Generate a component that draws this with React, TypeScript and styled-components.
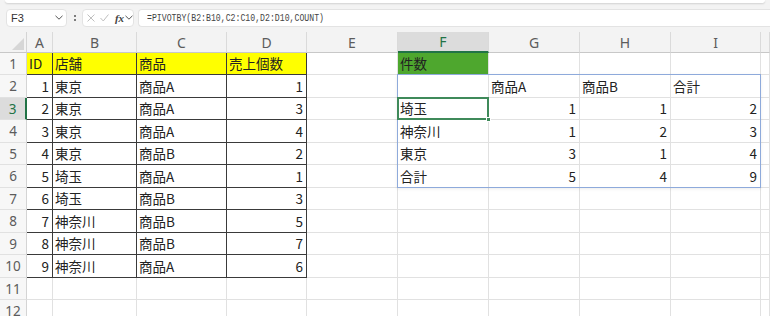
import React from 'react';
import styled, { createGlobalStyle, css } from 'styled-components';

const GlobalStyle = createGlobalStyle`
  html, body {
    margin: 0;
    padding: 0;
    background: #f3f3f3;
  }
  body {
    font-family: "Noto Sans CJK JP", "Noto Sans", sans-serif;
    overflow: hidden;
  }
`;

const COL_WIDTHS = [27, 26, 84, 90, 80, 91, 91, 91, 91, 90];
const ROW_HEIGHTS = [21, 22, 23, 22, 23, 22, 23, 22, 23, 22, 23, 22, 23];
const LETTERS = ['A', 'B', 'C', 'D', 'E', 'F', 'G', 'H', 'I', ''];

const GRID_LINE = '#e1e1e1';
const TABLE_LINE = '#3a3a3a';
const ACCENT = '#217346';

type Align = 'left' | 'right';
type CellData = { text?: string | number; align?: Align; fill?: string; boxed?: boolean };

// A1:D10 source table
const table: (string | number)[][] = [
  ['ID', '店舗', '商品', '売上個数'],
  [1, '東京', '商品A', 1],
  [2, '東京', '商品A', 3],
  [3, '東京', '商品A', 4],
  [4, '東京', '商品B', 2],
  [5, '埼玉', '商品A', 1],
  [6, '埼玉', '商品B', 3],
  [7, '神奈川', '商品B', 5],
  [8, '神奈川', '商品B', 7],
  [9, '神奈川', '商品A', 6],
];

// F1:I6 pivot result
const pivot: (string | number)[][] = [
  ['件数', '', '', ''],
  ['', '商品A', '商品B', '合計'],
  ['埼玉', 1, 1, 2],
  ['神奈川', 1, 2, 3],
  ['東京', 3, 1, 4],
  ['合計', 5, 4, 9],
];

const cellAt = (row: number, col: number): CellData => {
  if (row <= 10 && col <= 3) {
    const v = table[row - 1][col];
    return {
      text: v,
      align: typeof v === 'number' ? 'right' : 'left',
      fill: row === 1 ? '#ffff00' : undefined,
      boxed: true,
    };
  }
  if (row <= 6 && col >= 5 && col <= 8) {
    const v = pivot[row - 1][col - 5];
    return {
      text: v,
      align: typeof v === 'number' ? 'right' : 'left',
      fill: row === 1 && col === 5 ? '#4ea72e' : undefined,
    };
  }
  return {};
};

const Page = styled.div`
  width: 770px;
  height: 316px;
  overflow: hidden;
  background: #f3f3f3;
`;

const RibbonEdge = styled.div`
  height: 3px;
  margin: 0 5px;
  background: #fff;
  border-radius: 0 0 6px 6px;
  box-shadow: 0 1px 2px rgba(0, 0, 0, 0.14);
`;

const FormulaBar = styled.div`
  display: flex;
  align-items: center;
  height: 29px;
  padding-left: 6px;
`;

const NameBox = styled.div`
  box-sizing: border-box;
  display: flex;
  align-items: center;
  justify-content: space-between;
  width: 61px;
  height: 18px;
  padding: 0 3px 0 4px;
  background: #fff;
  border: 1px solid #e3e3e3;
  border-radius: 4px;
  font-family: "Liberation Sans", Arial, sans-serif;
  font-size: 11px;
  color: #333;
`;

const Dots = styled.div`
  display: flex;
  flex-direction: column;
  gap: 2px;
  margin: 0 6px 0 7px;
  span {
    width: 2px;
    height: 2px;
    border-radius: 1px;
    background: #555;
  }
`;

const FuncBox = styled.div`
  box-sizing: border-box;
  display: flex;
  align-items: center;
  gap: 5px;
  width: 52px;
  height: 18px;
  padding-left: 4px;
  background: #fff;
  border: 1px solid #e3e3e3;
  border-radius: 4px;
`;

const Fx = styled.span`
  font-family: "Liberation Serif", serif;
  font-style: italic;
  font-weight: bold;
  font-size: 11px;
  color: #444;
  margin-left: 1px;
  margin-right: -4px;
`;

const FormulaInput = styled.div`
  flex: 1;
  box-sizing: border-box;
  height: 18px;
  margin-left: 4px;
  padding-left: 8px;
  display: flex;
  align-items: center;
  background: #fff;
  border: 1px solid #e3e3e3;
  border-right: none;
  border-radius: 4px 0 0 4px;
  overflow: hidden;
`;

const FormulaText = styled.span`
  font-family: "Liberation Mono", "DejaVu Sans Mono", monospace;
  font-size: 11px;
  color: #444;
  white-space: nowrap;
  transform: scaleX(0.745);
  transform-origin: left center;
`;

const Sheet = styled.div`
  display: grid;
  grid-template-columns: ${COL_WIDTHS.map((w) => `${w}px`).join(' ')} 1fr;
  grid-template-rows: ${ROW_HEIGHTS.map((h) => `${h}px`).join(' ')};
  background: #fff;
`;

// every grid item is placed explicitly so the overlays don't push cells around
const placed = css<{ $row: number; $col: number }>`
  grid-row: ${(p) => p.$row};
  grid-column: ${(p) => p.$col};
`;

const Corner = styled.div`
  grid-row: 1;
  grid-column: 1;
  box-sizing: border-box;
  display: flex;
  align-items: flex-end;
  justify-content: flex-end;
  padding: 0 2px 2px 0;
  background: #f3f3f3;
  border-right: 1px solid #d4d4d4;
  border-bottom: 1px solid #c8c8c8;
`;

const ColHeader = styled.div<{ $row: number; $col: number; $active?: boolean }>`
  ${placed};
  box-sizing: border-box;
  display: flex;
  align-items: center;
  justify-content: center;
  background: #f3f3f3;
  border-right: 1px solid #dadada;
  border-bottom: 1px solid #c8c8c8;
  font-family: "Noto Sans", "Liberation Sans", sans-serif;
  font-size: 14px;
  color: #5c5c5c;
  ${(p) =>
    p.$active &&
    css`
      background: #dcdcdc;
      color: ${ACCENT};
      border-bottom: 2px solid ${ACCENT};
    `}
`;

const RowHeader = styled.div<{ $row: number; $col: number; $active?: boolean }>`
  ${placed};
  box-sizing: border-box;
  display: flex;
  align-items: center;
  justify-content: center;
  background: #f7f7f7;
  border-right: 1px solid #d4d4d4;
  border-bottom: 1px solid ${GRID_LINE};
  font-family: "Noto Sans", "Liberation Sans", sans-serif;
  font-size: 13.5px;
  color: #5c5c5c;
  ${(p) =>
    p.$active &&
    css`
      background: #dcdcdc;
      color: ${ACCENT};
      border-right: 2px solid ${ACCENT};
    `}
`;

const Cell = styled.div<{ $row: number; $col: number; $align?: Align; $fill?: string; $boxed?: boolean }>`
  ${placed};
  box-sizing: border-box;
  display: flex;
  align-items: center;
  justify-content: ${(p) => (p.$align === 'right' ? 'flex-end' : 'flex-start')};
  padding: 1px 3px 0 2px;
  background: ${(p) => p.$fill || '#fff'};
  border-right: 1px solid ${(p) => (p.$boxed ? TABLE_LINE : GRID_LINE)};
  border-bottom: 1px solid ${(p) => (p.$boxed ? TABLE_LINE : GRID_LINE)};
  font-size: 13.5px;
  line-height: 1;
  color: #222;
  white-space: nowrap;
  overflow: hidden;
`;

const SpillOutline = styled.div`
  grid-column: 7 / 11;
  grid-row: 3 / 8;
  margin: -1px 0 0 -1px;
  border: 1px solid #8eaadb;
  box-shadow: 0 1px 3px rgba(0, 0, 0, 0.08);
  pointer-events: none;
`;

const Selection = styled.div`
  position: relative;
  grid-column: 7 / 8;
  grid-row: 4 / 5;
  margin: -1px 0 0 -1px;
  border: 2px solid #3f8a5a;
  pointer-events: none;
`;

const FillHandle = styled.span`
  position: absolute;
  right: -4px;
  bottom: -4px;
  width: 5px;
  height: 5px;
  background: #3f8a5a;
  border: 1px solid #fff;
  box-sizing: border-box;
`;

const Chevron = () => (
  <svg width="8" height="5" viewBox="0 0 8 5">
    <path d="M0.5 0.8 L4 4.2 L7.5 0.8" fill="none" stroke="#555" strokeWidth="1" />
  </svg>
);

const App: React.FC = () => {
  const rows = Array.from({ length: 12 }, (_, i) => i + 1);
  const cols = Array.from({ length: 10 }, (_, i) => i);

  return (
    <Page>
      <GlobalStyle />
      <RibbonEdge />
      <FormulaBar>
        <NameBox>
          <span>F3</span>
          <Chevron />
        </NameBox>
        <Dots>
          <span />
          <span />
        </Dots>
        <FuncBox>
          <svg width="8" height="8" viewBox="0 0 8 8">
            <path d="M0.5 0.5 L7.5 7.5 M7.5 0.5 L0.5 7.5" stroke="#bdbdbd" strokeWidth="1" />
          </svg>
          <svg width="9" height="8" viewBox="0 0 9 8">
            <path d="M0.5 4 L3.3 7 L8.5 0.5" fill="none" stroke="#bdbdbd" strokeWidth="1" />
          </svg>
          <Fx>fx</Fx>
          <Chevron />
        </FuncBox>
        <FormulaInput>
          <FormulaText>=PIVOTBY(B2:B10,C2:C10,D2:D10,COUNT)</FormulaText>
        </FormulaInput>
      </FormulaBar>

      <Sheet>
        <Corner>
          <svg width="12" height="12" viewBox="0 0 12 12">
            <path d="M12 0 L12 12 L0 12 Z" fill="#d6d6d6" />
          </svg>
        </Corner>
        {cols.map((c) => (
          <ColHeader key={`h${c}`} $row={1} $col={c + 2} $active={c === 5}>
            {LETTERS[c]}
          </ColHeader>
        ))}

        {rows.map((r) => (
          <React.Fragment key={r}>
            <RowHeader $row={r + 1} $col={1} $active={r === 3}>
              {r}
            </RowHeader>
            {cols.map((c) => {
              const d = cellAt(r, c);
              return (
                <Cell
                  key={c}
                  $row={r + 1}
                  $col={c + 2}
                  $align={d.align}
                  $fill={d.fill}
                  $boxed={d.boxed}
                >
                  {d.text}
                </Cell>
              );
            })}
          </React.Fragment>
        ))}

        <SpillOutline />
        <Selection>
          <FillHandle />
        </Selection>
      </Sheet>
    </Page>
  );
};

export default App;
